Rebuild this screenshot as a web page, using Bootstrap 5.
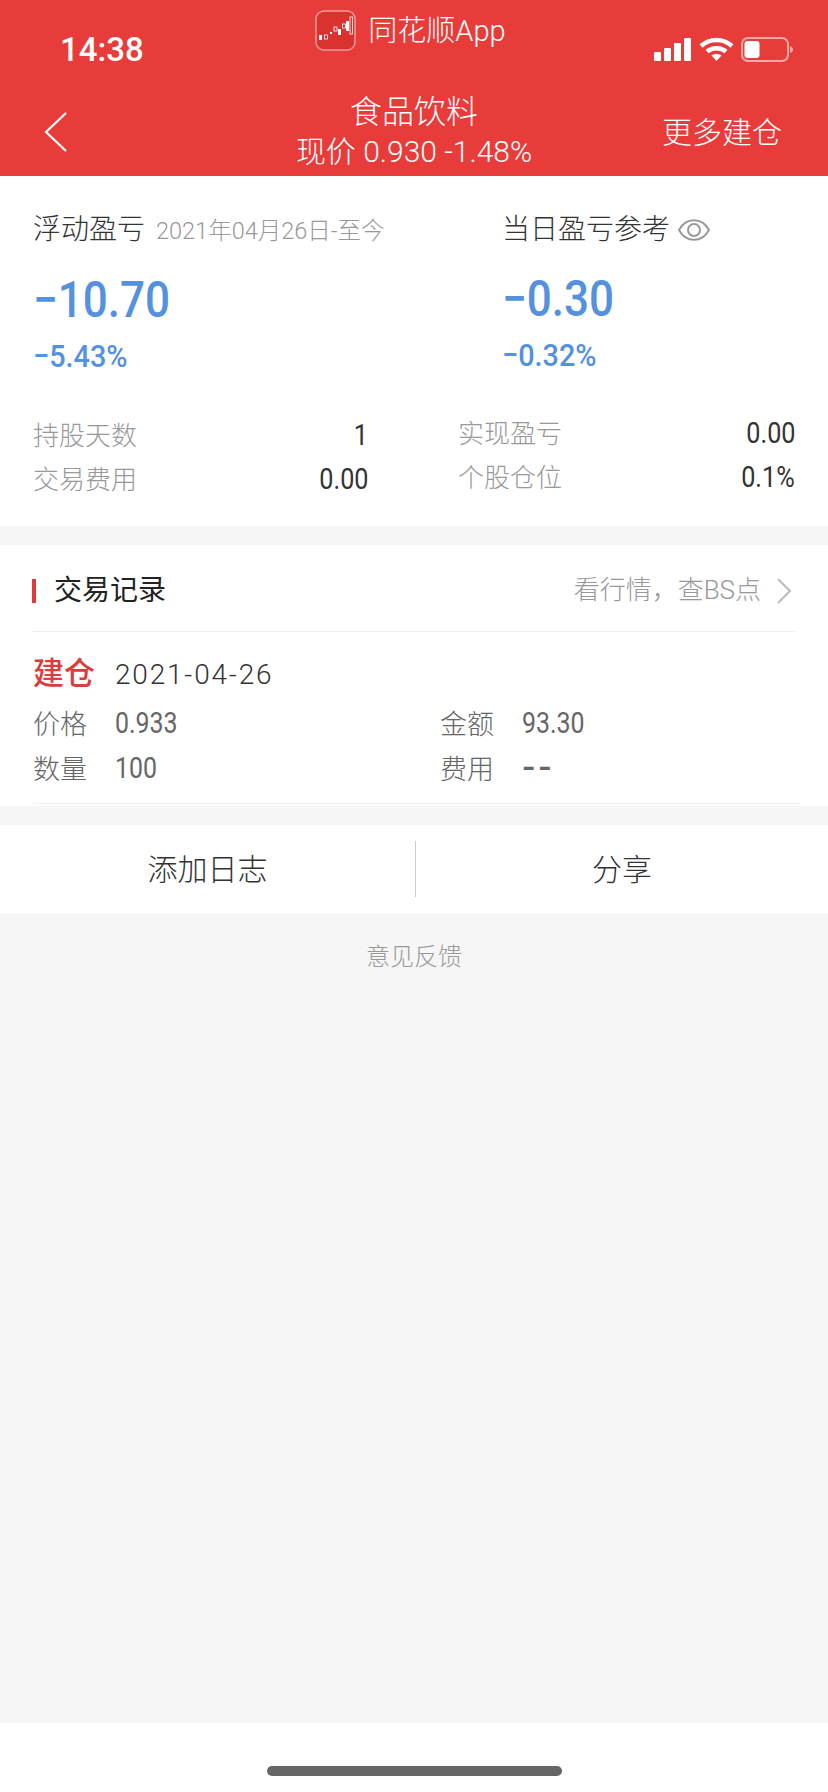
<!DOCTYPE html>
<html lang="zh-CN">
<head>
    <meta charset="UTF-8">
    <meta name="viewport" content="width=device-width, initial-scale=1.0">
    <title>食品饮料</title>
    <link rel="stylesheet" href="https://cdn.jsdelivr.net/npm/bootstrap@5.3.0/dist/css/bootstrap.min.css">
    <style>
        html, body { height: 100%; }
        body { width: 828px; height: 1792px; overflow: hidden; background: #fff; color: #333; font-family: Roboto, "Noto Sans CJK SC", sans-serif; font-weight: 300; }
        .screen { height: 1723px; background: #f6f6f6; }

        /* red header */
        .top-head { height: 176px; background: #e83c3a; color: #fff; }
        .status-row { height: 92px; display: grid; grid-template-columns: 1fr auto 1fr; }
        .clock { padding: 30px 0 0 60px; font-size: 33px; line-height: 40px; font-weight: 500; }
        .app-tag { padding: 10px 7px 0 0; gap: 12px; font-size: 29px; line-height: 42px; }
        .status-icons { padding: 37px 34px 0 0; gap: 7px; }
        .nav-row { height: 80px; }
        .nav-side { width: 170px; }
        .nav-back { padding-left: 44px; }
        .nav-more { padding-right: 46px; font-size: 30px; font-weight: 300; }
        .nav-title { font-size: 32px; line-height: 40px; }
        .nav-sub { font-size: 30px; line-height: 40px; white-space: nowrap; }

        /* profit card */
        .profit-card { height: 350px; background: #fff; padding: 34px 33px 0; }
        .profit-left { width: 469px; }
        .profit-title { font-size: 28px; line-height: 40px; color: #333; }
        .profit-date { font-size: 23.500px; color: #999; margin-left: 11px; }
        .big-num { font-size: 50px; line-height: 60px; font-weight: 500; color: #5491de; margin-top: 19px; transform: scaleX(.88); transform-origin: left; }
        .small-num { font-size: 32px; line-height: 40px; font-weight: 500; color: #5491de; margin-top: 6px; transform: scaleX(.9); transform-origin: left; }
        .stat-area { margin-top: 38px; }
        .stat-col { width: 335px; }
        .stat-col + .stat-col { width: 337px; margin-left: 90px; margin-top: -2px; }
        .stat-line { height: 44px; font-size: 26px; color: #999; }
        .stat-line b { font-size: 30px; font-weight: 400; color: #333; margin-bottom: 4px; transform: scaleX(.84); transform-origin: right; }

        /* trade card */
        .trade-card { height: 261px; margin-top: 19px; background: #fff; padding: 0 33px; }
        .trade-head { height: 87px; border-bottom: 1px solid #eee; padding-top: 5px; }
        .trade-label { font-size: 28px; font-weight: 400; color: #222; padding-left: 18px; border-left: 4px solid #e0393e; line-height: 24px; margin-left: -1px; }
        .trade-link { font-size: 26px; color: #999; gap: 16px; padding-right: 3px; }
        .trade-kind { height: 69px; padding-top: 16px; }
        .trade-kind strong { font-size: 31px; font-weight: 500; color: #dc3c3c; width: 82px; }
        .trade-kind span { font-size: 28px; font-weight: 300; letter-spacing: 1.800px; color: #333; }
        .trade-row { height: 45px; font-size: 27px; color: #666; }
        .trade-cell { flex: 0 0 407px; }
        .trade-cell i { font-style: normal; display: inline-block; width: 82px; margin-top: 3px; }
        .trade-val { font-size: 30px; font-weight: 400; margin-bottom: 2px; transform: scaleX(.83); transform-origin: left; }
        .trade-dash { font-family: "Liberation Sans", sans-serif; font-size: 40px; line-height: 1; letter-spacing: 3px; margin-bottom: 8px; }
        .trade-bottom { border-bottom: 1px solid #eee; height: 13px; margin-right: -5px; }

        /* action bar */
        .action-bar { height: 88px; margin-top: 19px; background: #fff; }
        .action-bar > div { font-size: 30px; color: #333; }
        .action-bar > div + div { border-left: 1px solid #ccc; height: 56px; }
        .action-left { width: 415px; }
        .feedback { font-size: 24px; line-height: 88px; color: #999; }

        .home-area { height: 69px; }
        .home-bar { width: 295px; height: 10px; border-radius: 5px; background: #666; margin-top: 43px; }
    </style>
</head>

<body>
    <div class="screen">
        <div class="top-head">
            <div class="status-row">
                <div class="clock">14:38</div>
                <div class="app-tag d-flex align-items-start">
                    <svg width="41" height="41" viewBox="0 0 41 41">
                        <rect x="1" y="1" width="39" height="39" rx="8" fill="#d9322f" stroke="#f29a97" stroke-width="1.500"/>
                        <g fill="#fff">
                            <rect x="4" y="25" width="3" height="5"/><rect x="9.500" y="25" width="3" height="4" fill="none" stroke="#fff" stroke-width=".8"/>
                            <rect x="15" y="22" width="2" height="2"/><rect x="19" y="17" width="3" height="4" fill="none" stroke="#fff" stroke-width=".8"/>
                            <rect x="23" y="19" width="3" height="6"/><rect x="27.500" y="14" width="3" height="4" fill="none" stroke="#fff" stroke-width=".8"/>
                            <rect x="31" y="11" width="3" height="10"/><rect x="35" y="7" width="2.500" height="17" fill="none" stroke="#fff" stroke-width=".8"/>
                        </g>
                    </svg>
                    <span>同花顺App</span>
                </div>
                <div class="status-icons d-flex justify-content-end align-items-start">
                    <svg width="38" height="24" viewBox="0 0 38 24" fill="#fff">
                        <rect x="0" y="15" width="7" height="9" rx="1"/><rect x="10" y="11" width="7" height="13" rx="1"/>
                        <rect x="20" y="6" width="7" height="18" rx="1"/><rect x="30" y="1" width="7" height="23" rx="1"/>
                    </svg>
                    <svg width="35" height="24" viewBox="0 0 35 24" fill="none" stroke="#fff" stroke-width="4.500">
                        <path d="M2 9C11 1 24 1 33 9"/><path d="M8 14.500C13 10 22 10 27 14.500"/>
                        <path d="M17.500 24L12.500 18.500C15 16.500 20 16.500 22.500 18.500Z" fill="#fff" stroke="none"/>
                    </svg>
                    <svg width="53" height="25" viewBox="0 0 53 25">
                        <rect x="1" y="1" width="46" height="23" rx="6" fill="none" stroke="#f6aaa8" stroke-width="2"/>
                        <rect x="3.500" y="4" width="15" height="17" rx="3" fill="#fff"/>
                        <path d="M49 9C51 10 52 11 52 12.500C52 14 51 15 49 16Z" fill="#f6aaa8"/>
                    </svg>
                </div>
            </div>
            <div class="nav-row d-flex align-items-center">
                <div class="nav-side nav-back d-flex align-items-center">
                    <svg width="24" height="40" viewBox="0 0 24 40" fill="none" stroke="#fff" stroke-width="2.200"><path d="M22 1L2 20L22 39"/></svg>
                </div>
                <div class="flex-grow-1 text-center">
                    <div class="nav-title">食品饮料</div>
                    <div class="nav-sub">现价 0.930 -1.48%</div>
                </div>
                <div class="nav-side nav-more text-end">更多建仓</div>
            </div>
        </div>

        <div class="profit-card">
            <div class="d-flex">
                <div class="profit-left">
                    <div class="profit-title">浮动盈亏<span class="profit-date">2021年04月26日-至今</span></div>
                    <div class="big-num">−10.70</div>
                    <div class="small-num">−5.43%</div>
                </div>
                <div>
                    <div class="profit-title d-flex align-items-center gap-2">当日盈亏参考
                        <svg width="32" height="24" viewBox="0 0 32 24" fill="none" stroke="#999" stroke-width="2">
                            <path d="M1 12C8 -1 24 -1 31 12C24 25 8 25 1 12Z"/><circle cx="16" cy="12" r="6"/>
                        </svg>
                    </div>
                    <div class="big-num">−0.30</div>
                    <div class="small-num">−0.32%</div>
                </div>
            </div>
            <div class="stat-area d-flex">
                <div class="stat-col">
                    <div class="stat-line d-flex justify-content-between align-items-center"><span>持股天数</span><b>1</b></div>
                    <div class="stat-line d-flex justify-content-between align-items-center"><span>交易费用</span><b>0.00</b></div>
                </div>
                <div class="stat-col">
                    <div class="stat-line d-flex justify-content-between align-items-center"><span>实现盈亏</span><b>0.00</b></div>
                    <div class="stat-line d-flex justify-content-between align-items-center"><span>个股仓位</span><b>0.1%</b></div>
                </div>
            </div>
        </div>

        <div class="trade-card">
            <div class="trade-head d-flex justify-content-between align-items-center">
                <div class="trade-label">交易记录</div>
                <div class="trade-link d-flex align-items-center">看行情，查BS点
                    <svg width="15" height="26" viewBox="0 0 15 26" fill="none" stroke="#bbb" stroke-width="2"><path d="M1 1L13 13L1 25"/></svg>
                </div>
            </div>
            <div class="trade-kind d-flex align-items-center"><strong>建仓</strong><span>2021-04-26</span></div>
            <div class="trade-row d-flex align-items-center">
                <div class="trade-cell d-flex align-items-center"><i>价格</i><span class="trade-val">0.933</span></div>
                <div class="trade-cell d-flex align-items-center"><i>金额</i><span class="trade-val">93.30</span></div>
            </div>
            <div class="trade-row d-flex align-items-center">
                <div class="trade-cell d-flex align-items-center"><i>数量</i><span class="trade-val">100</span></div>
                <div class="trade-cell d-flex align-items-center"><i>费用</i><span class="trade-dash">--</span></div>
            </div>
            <div class="trade-bottom"></div>
        </div>

        <div class="action-bar d-flex align-items-center">
            <div class="action-left text-center">添加日志</div>
            <div class="flex-grow-1 d-flex align-items-center justify-content-center">分享</div>
        </div>
        <div class="feedback text-center">意见反馈</div>
    </div>
    <div class="home-area d-flex justify-content-center">
        <div class="home-bar"></div>
    </div>

    <script src="https://cdn.jsdelivr.net/npm/bootstrap@5.3.0/dist/js/bootstrap.bundle.min.js"></script>
</body>
</html>
